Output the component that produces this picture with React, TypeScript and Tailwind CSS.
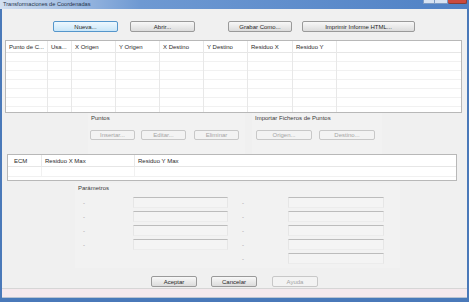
import type { ReactNode } from 'react';

type Variant = 'normal' | 'focused' | 'disabled';

const variants: Record<Variant, string> = {
  normal: 'border-[#9a9a9a] bg-linear-to-b from-[#f8f8f8] to-[#dcdcdc] text-[#262626]',
  focused: 'border-[#5596cb] bg-linear-to-b from-[#eef8fe] to-[#c9e6f8] text-[#262626]',
  disabled: 'border-[#c8c8c8] bg-[#f3f3f3] text-[#a5a5a5]',
};

function WinButton({ children, variant = 'normal', className = '' }: { children: ReactNode; variant?: Variant; className?: string }) {
  return (
    <div className={`flex h-full shrink-0 items-center justify-center rounded-[2px] border text-[6px] leading-none ${variants[variant]} ${className}`}>
      {children}
    </div>
  );
}

const pointColumns: { label: string; width: string }[] = [
  { label: 'Punto de C...', width: 'w-[42px]' },
  { label: 'Usa...', width: 'w-[24px]' },
  { label: 'X Origen', width: 'w-[44px]' },
  { label: 'Y Origen', width: 'w-[44px]' },
  { label: 'X Destino', width: 'w-[44px]' },
  { label: 'Y Destino', width: 'w-[44px]' },
  { label: 'Residuo X', width: 'w-[45px]' },
  { label: 'Residuo Y', width: 'w-[44px]' },
];

const rows = [0, 1, 2, 3, 4, 5, 6];

function GridColumn({ label, width, last }: { label: string; width: string; last?: boolean }) {
  return (
    <div className={`flex shrink-0 flex-col ${width} ${last ? 'flex-1' : 'border-r border-[#e8e8e8]'}`}>
      <div className="flex h-[12px] shrink-0 items-center border-b border-[#e6e6e6] pl-[3px] text-[6px] leading-none whitespace-nowrap">
        {label}
      </div>
      {rows.map((r) => (
        <div key={r} className="h-[9px] shrink-0 border-b border-[#f1f1f1]" />
      ))}
    </div>
  );
}

function ParamRow({ labelWidth, boxWidth }: { labelWidth: string; boxWidth: string }) {
  return (
    <div className="flex h-[11px] items-center">
      <span className={`${labelWidth} text-[6px] leading-none text-[#9a9a9a]`}>-</span>
      <div className={`${boxWidth} h-full border-t border-t-[#bcbcbc] border-x border-b border-x-[#e6e6e6] border-b-[#ececec] bg-[#f4f4f4]`} />
    </div>
  );
}

export default function App() {
  return (
    <div className="flex h-[302px] w-[469px] flex-col overflow-hidden bg-[#4a79b9] font-['Liberation_Sans',Arial,sans-serif] text-[#2a2a2a]">
      {/* title bar */}
      <div className="relative flex h-[9px] shrink-0 items-center bg-linear-to-r from-[#d3e0f1] via-[#6e99d2] via-30% to-[#4f81c5] pl-[3px]">
        <span className="text-[5.6px] leading-none text-[#24324a]">Transformaciones de Coordenadas</span>
        <div className="absolute top-0 right-[2px] flex h-[4px]">
          <div className="w-[12px] rounded-b-[1px] border-x border-b border-[#7f9cc4] bg-[#d8e3f2]" />
          <div className="w-[13px] rounded-b-[1px] border-r border-b border-[#7f9cc4] bg-[#d8e3f2]" />
          <div className="w-[19px] rounded-b-[2px] border-r border-b border-[#8a3b34] bg-[#cb4a3e]" />
        </div>
      </div>

      {/* body */}
      <div className="mx-[2px] flex h-[289px] shrink-0 flex-col bg-[#f0f0f0]">
        <div className="mt-[12px] flex h-[11px] shrink-0">
          <WinButton variant="focused" className="ml-[51px] w-[65px]">Nueva...</WinButton>
          <WinButton className="ml-[12px] w-[65px]">Abrir...</WinButton>
          <WinButton className="ml-[33px] w-[64px]">Grabar Como...</WinButton>
          <WinButton className="ml-[10px] w-[113px]">Imprimir Informe HTML...</WinButton>
        </div>

        <div className="mt-[8px] ml-[3px] flex h-[73px] w-[457px] shrink-0 overflow-hidden border border-[#b8b8b8] bg-white">
          {pointColumns.map((c) => (
            <GridColumn key={c.label} label={c.label} width={c.width} />
          ))}
          <GridColumn label="" width="" last />
        </div>

        <div className="flex h-[41px] shrink-0">
          <div className="ml-[86px] flex h-full w-[157px] flex-col bg-[#f2f2f2]">
            <span className="mt-[2px] ml-[3px] h-[6px] text-[6px] leading-none text-[#3a3a3a]">Puntos</span>
            <div className="mt-[9px] flex h-[10px]">
              <WinButton variant="disabled" className="ml-[2px] w-[45px]">Insertar...</WinButton>
              <WinButton variant="disabled" className="ml-[6px] w-[45px]">Editar...</WinButton>
              <WinButton variant="disabled" className="ml-[8px] w-[45px]">Eliminar</WinButton>
            </div>
          </div>
          <div className="ml-[7px] flex h-full w-[130px] flex-col bg-[#f2f2f2]">
            <span className="mt-[2px] ml-[3px] h-[6px] text-[6px] leading-none text-[#3a3a3a]">Importar Ficheros de Puntos</span>
            <div className="mt-[9px] flex h-[10px]">
              <WinButton variant="disabled" className="ml-[4px] w-[56px]">Origen...</WinButton>
              <WinButton variant="disabled" className="ml-[7px] w-[56px]">Destino...</WinButton>
            </div>
          </div>
        </div>

        <div className="ml-[5px] flex h-[27px] w-[450px] shrink-0 flex-col border border-[#b8b8b8] bg-white">
          <div className="flex h-[12px] shrink-0 border-b border-[#e6e6e6] text-[6px] leading-none">
            <div className="flex w-[34px] items-center border-r border-[#e8e8e8] pl-[6px]">ECM</div>
            <div className="flex w-[93px] items-center border-r border-[#e8e8e8] pl-[3px]">Residuo X Max</div>
            <div className="flex flex-1 items-center pl-[3px]">Residuo Y Max</div>
          </div>
          <div className="flex h-[10px] shrink-0 border-b border-[#f1f1f1]">
            <div className="w-[34px] border-r border-[#f1f1f1]" />
            <div className="w-[93px] border-r border-[#f1f1f1]" />
          </div>
        </div>

        <div className="mt-[2px] ml-[73px] flex h-[85px] w-[325px] shrink-0 flex-col bg-[#f2f2f2]">
          <span className="mt-[2px] ml-[3px] h-[6px] text-[6px] leading-none text-[#3a3a3a]">Parámetros</span>
          <div className="mt-[6px] flex">
            <div className="ml-[8px] flex flex-col gap-[3px]">
              {[0, 1, 2, 3].map((i) => (
                <ParamRow key={i} labelWidth="w-[50px]" boxWidth="w-[95px]" />
              ))}
            </div>
            <div className="ml-[14px] flex flex-col gap-[3px]">
              {[0, 1, 2, 3, 4].map((i) => (
                <ParamRow key={i} labelWidth="w-[46px]" boxWidth="w-[96px]" />
              ))}
            </div>
          </div>
        </div>

        <div className="mt-[8px] flex h-[11px] shrink-0">
          <WinButton className="ml-[149px] w-[46px]">Aceptar</WinButton>
          <WinButton className="ml-[14px] w-[46px]">Cancelar</WinButton>
          <WinButton variant="disabled" className="ml-[15px] w-[46px]">Ayuda</WinButton>
        </div>

        <div className="mt-[1px] h-[1px] shrink-0 bg-[#d6d6d6]" />
        <div className="h-[9px] shrink-0 border-b border-[#b9c3d2] bg-[#f5e9ed]" />
      </div>
    </div>
  );
}
